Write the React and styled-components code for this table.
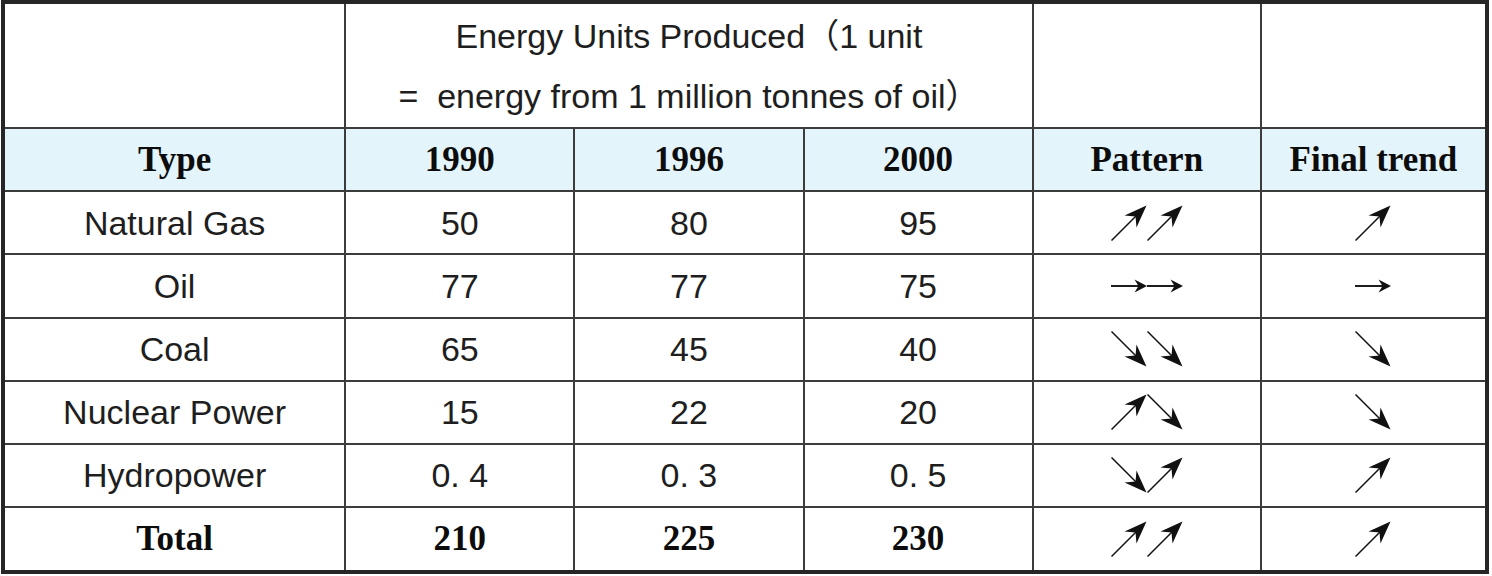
import React from "react"
import styled, { createGlobalStyle } from "styled-components"

const GlobalStyle = createGlobalStyle`
  body {
    margin: 0;
    background: #ffffff;
  }
`

const Page = styled.div`
  padding: 0 0 0 1px;
`

const Frame = styled.div`
  box-sizing: border-box;
  width: 1488px;
  height: 574px;
  border: 4px solid #262626;
  background: #ffffff;
`

const Table = styled.table`
  width: 100%;
  height: 100%;
  border-collapse: collapse;
  border-style: hidden;
  table-layout: fixed;
  color: #181818;
`

const Row = styled.tr`
  height: ${p => p.$h}px;
  background: ${p => (p.$head ? "#e3f4fb" : "transparent")};
`

const Cell = styled.td`
  border: 2px solid #3c3c3c;
  padding: 0;
  text-align: center;
  vertical-align: middle;
  font-family: ${p =>
    p.$bold ? `"Liberation Serif", "Times New Roman", serif` : `"Liberation Sans", Arial, sans-serif`};
  font-weight: ${p => (p.$bold ? 700 : 400)};
  font-size: ${p => (p.$bold ? 35 : 34)}px;
  line-height: 1;
  color: ${p => (p.$bold ? "#0c0c0c" : "#1e1e1e")};
`

const UnitsNote = styled.div`
  font-family: "Liberation Sans", "Noto Sans CJK KR", Arial, sans-serif;
  font-size: 34px;
  line-height: 60px;
  color: #1e1e1e;
  padding-top: 1px;
`

const Arrows = styled.div`
  display: flex;
  justify-content: center;
  align-items: center;
`

const ArrowSvg = styled.svg`
  display: block;
  transform: ${p => (p.$down ? "scaleY(-1)" : "none")};
`

const Arrow = ({ dir }) => {
  if (dir === "right") {
    return (
      <ArrowSvg width="36" height="16" viewBox="0 0 36 16">
        <line x1="0" y1="8" x2="29" y2="8" stroke="#111" strokeWidth="1.9" />
        <path d="M36 8 L23.5 1.5 L27.5 8 L23.5 14.5 Z" fill="#111" />
      </ArrowSvg>
    )
  }
  return (
    <ArrowSvg width="36" height="36" viewBox="0 0 36 36" $down={dir === "down"}>
      <line x1="0.5" y1="35.5" x2="26" y2="10" stroke="#111" strokeWidth="1.5" />
      <path d="M35.5 0.5 L13.5 10.5 L24.5 11.5 L25.5 22.5 Z" fill="#111" />
    </ArrowSvg>
  )
}

const rows = [
  { type: "Natural Gas", values: ["50", "80", "95"], pattern: ["up", "up"], trend: "up" },
  { type: "Oil", values: ["77", "77", "75"], pattern: ["right", "right"], trend: "right" },
  { type: "Coal", values: ["65", "45", "40"], pattern: ["down", "down"], trend: "down" },
  { type: "Nuclear Power", values: ["15", "22", "20"], pattern: ["up", "down"], trend: "down" },
  { type: "Hydropower", values: ["0. 4", "0. 3", "0. 5"], pattern: ["down", "up"], trend: "up" },
  { type: "Total", values: ["210", "225", "230"], pattern: ["up", "up"], trend: "up", total: true },
]

const App = () => (
  <>
    <GlobalStyle />
    <Page>
      <Frame>
        <Table>
          <colgroup>
            <col style={{ width: 340 }} />
            <col style={{ width: 229 }} />
            <col style={{ width: 229 }} />
            <col style={{ width: 229 }} />
            <col style={{ width: 228 }} />
            <col style={{ width: 224 }} />
          </colgroup>
          <tbody>
            <Row $h={124}>
              <Cell />
              <Cell colSpan={3}>
                <UnitsNote>
                  <div>Energy Units Produced（1 unit</div>
                  <div>=&nbsp; energy from 1 million tonnes of oil）</div>
                </UnitsNote>
              </Cell>
              <Cell />
              <Cell />
            </Row>
            <Row $h={63} $head>
              <Cell $bold>Type</Cell>
              <Cell $bold>1990</Cell>
              <Cell $bold>1996</Cell>
              <Cell $bold>2000</Cell>
              <Cell $bold>Pattern</Cell>
              <Cell $bold>Final trend</Cell>
            </Row>
            {rows.map(r => (
              <Row $h={63} key={r.type}>
                <Cell $bold={r.total}>{r.type}</Cell>
                {r.values.map((v, i) => (
                  <Cell $bold={r.total} key={i}>
                    {v}
                  </Cell>
                ))}
                <Cell>
                  <Arrows>
                    {r.pattern.map((d, i) => (
                      <Arrow dir={d} key={i} />
                    ))}
                  </Arrows>
                </Cell>
                <Cell>
                  <Arrows>
                    <Arrow dir={r.trend} />
                  </Arrows>
                </Cell>
              </Row>
            ))}
          </tbody>
        </Table>
      </Frame>
    </Page>
  </>
)

export default App
